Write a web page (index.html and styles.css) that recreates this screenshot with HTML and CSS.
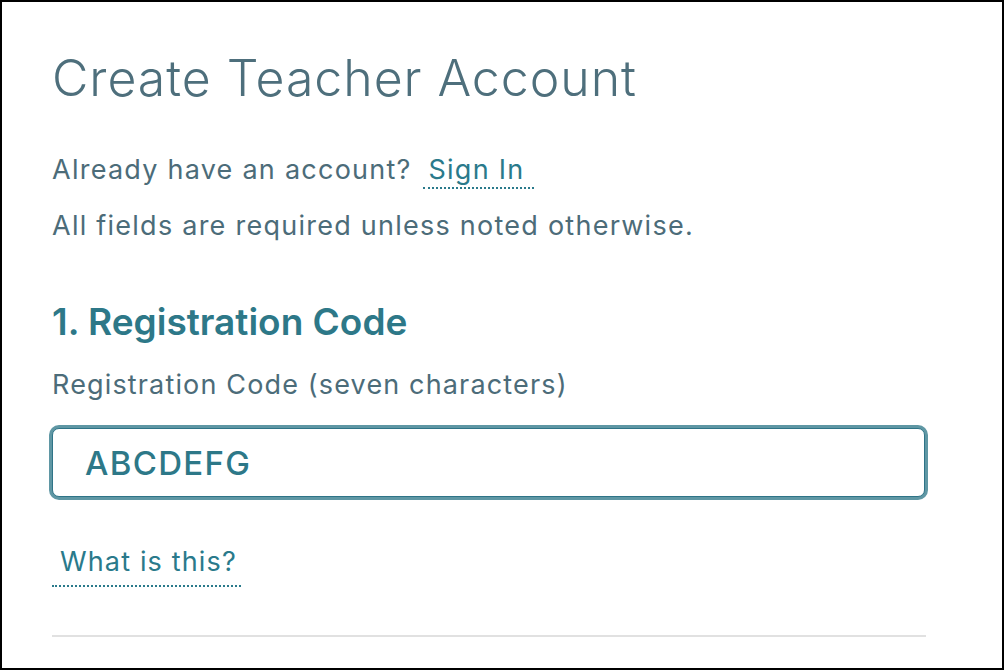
FILE: index.html
```html
<!DOCTYPE html>
<html lang="en">
<head>
<meta charset="utf-8">
<title>Create Teacher Account</title>
<link rel="stylesheet" href="styles.css">
</head>
<body>
<div class="frame">
  <h1 class="title">Create Teacher Account</h1>
  <p class="line intro">Already have an account? <a class="link signin" href="#">Sign In</a></p>
  <p class="line note">All fields are required unless noted otherwise.</p>
  <h2 class="section">1. Registration Code</h2>
  <label class="label" for="code">Registration Code (seven characters)</label>
  <div class="field"><input id="code" class="input" type="text" value="ABCDEFG"></div>
  <a class="link help" href="#">What is this?</a>
  <hr class="rule">
</div>
</body>
</html>
```
FILE: styles.css
```css
html, body {
  margin: 0;
  padding: 0;
  background: #fff;
}
.frame {
  box-sizing: border-box;
  width: 1004px;
  height: 670px;
  border: 2px solid #000;
  padding: 0 76px 0 50px;
  overflow: hidden;
  font-family: Inter, Lato, "Liberation Sans", sans-serif;
  color: #4c6c79;
}
.title {
  margin: 46px 0 0;
  font-weight: 300;
  font-size: 50px;
  line-height: 60px;
  letter-spacing: 0.95px;
  color: #4e6f7c;
}
.line {
  margin: 0;
  font-size: 27px;
  line-height: 36px;
  letter-spacing: 1.25px;
}
.intro {
  margin-top: 44px;
}
.note {
  margin-top: 20px;
}
.link {
  color: #2a7a8b;
  text-decoration: none;
  border-bottom: 2px dotted #2a7a8b;
  letter-spacing: 1.25px;
}
.signin {
  padding: 0 10px 1px 6px;
  margin-left: 2px;
}
.section {
  margin: 56px 0 0;
  font-weight: 600;
  font-size: 37px;
  line-height: 44px;
  color: #2d7888;
}
.label {
  display: block;
  margin-top: 23px;
  font-size: 27px;
  line-height: 36px;
  letter-spacing: 1.15px;
}
.field {
  margin-top: 25px;
}
.input {
  box-sizing: border-box;
  display: block;
  width: 873px;
  height: 69px;
  margin: 0;
  padding: 0 0 0 32px;
  border: 1px solid #2f7487;
  border-radius: 7px;
  box-shadow: 0 0 0 3px #5f97a4;
  outline: none;
  font-family: Inter, Lato, "Liberation Sans", sans-serif;
  font-weight: 500;
  font-size: 33px;
  letter-spacing: 1.3px;
  color: #2d7888;
  background: #fff;
}
.help {
  display: inline-block;
  margin-top: 47px;
  padding: 0 4px 5px 8px;
  font-size: 27px;
  line-height: 36px;
  letter-spacing: 1.15px;
}
.rule {
  width: 874px;
  margin: 48px 0 0;
  border: 0;
  height: 2px;
  background: #e1e1e1;
}
```
